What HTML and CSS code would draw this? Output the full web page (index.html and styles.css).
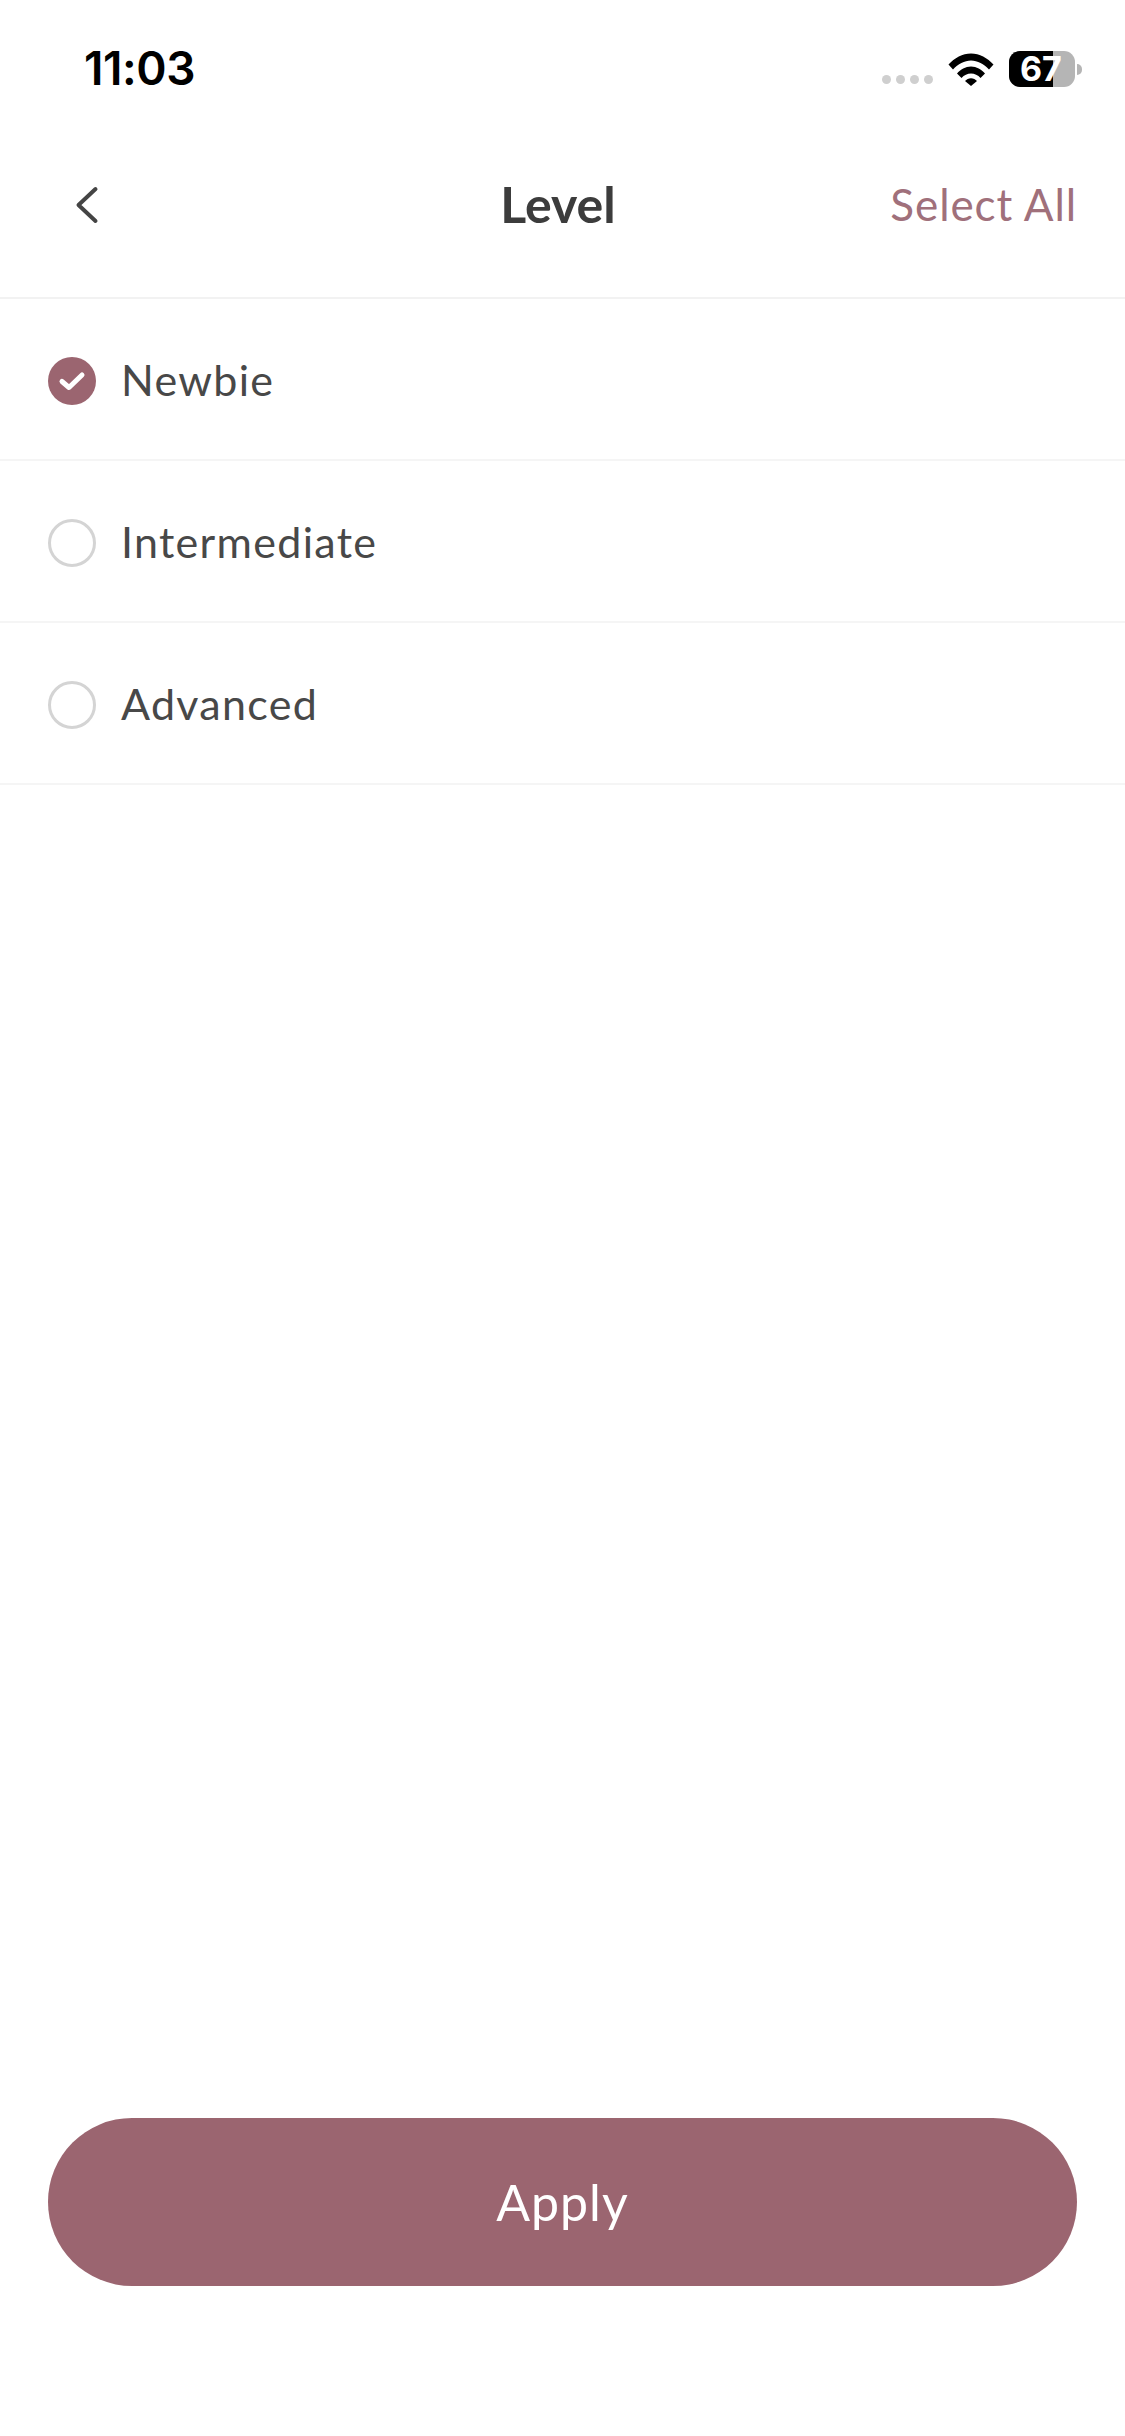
FILE: index.html
```html
<!DOCTYPE html>
<html lang="en">
<head>
    <meta charset="UTF-8">
    <meta name="viewport" content="width=device-width, initial-scale=1.0">
    <title>Level</title>
    <link rel="stylesheet" href="styles.css">
</head>
<body>
    <div class="screen">
        <!-- Status bar -->
        <div class="status-bar">
            <span class="time">11:03</span>
            <div class="status-icons">
                <div class="signal">
                    <span></span><span></span><span></span><span></span>
                </div>
                <svg class="wifi" viewBox="0 0 46 33" width="46" height="33">
                    <path d="M0.5 11.5C6.5 5 14.5 0.5 23 0.5C31.5 0.5 39.5 5 45.5 11.5L41 16.5C36 11 29.5 7.5 23 7.5C16.500 7.5 10 11 5 16.5Z" fill="#000"/>
                    <path d="M9 20.500C12.500 16.500 17.500 13.500 23 13.500C28.500 13.500 33.500 16.500 37 20.500L32.500 25C30 22.200 26.500 20.500 23 20.500C19.500 20.500 16 22.200 13.500 25Z" fill="#000"/>
                    <path d="M17 28C18.500 26.300 20.700 25.200 23 25.200C25.300 25.200 27.500 26.300 29 28L23 33Z" fill="#000"/>
                </svg>
                <div class="battery">
                    <div class="battery-body">
                        <div class="battery-fill"></div>
                        <span class="battery-level">67</span>
                    </div>
                    <div class="battery-nub"></div>
                </div>
            </div>
        </div>

        <!-- Header -->
        <header class="nav-bar">
            <button class="back-btn" aria-label="Back">
                <svg viewBox="0 0 24 38" width="24" height="38">
                    <path d="M20.500 3L3.500 19L20.500 35" fill="none" stroke="#444" stroke-width="4" stroke-linecap="round" stroke-linejoin="round"/>
                </svg>
            </button>
            <h1 class="nav-title">Level</h1>
            <a class="select-all">Select All</a>
        </header>

        <!-- Options -->
        <ul class="level-list">
            <li class="level-row">
                <span class="radio checked">
                    <svg viewBox="0 0 48 48" width="48" height="48">
                        <path d="M14 24.500L21 30.500L34 18" fill="none" stroke="#fff" stroke-width="5" stroke-linecap="round" stroke-linejoin="round"/>
                    </svg>
                </span>
                <span class="level-name">Newbie</span>
            </li>
            <li class="level-row">
                <span class="radio"></span>
                <span class="level-name">Intermediate</span>
            </li>
            <li class="level-row">
                <span class="radio"></span>
                <span class="level-name">Advanced</span>
            </li>
        </ul>

        <div class="footer">
            <button class="apply-btn">Apply</button>
        </div>
    </div>
</body>
</html>
```

FILE: styles.css
```css
/* General Styles */
* {
    box-sizing: border-box;
}

body {
    margin: 0;
    background-color: #ffffff;
    font-family: 'Lato', sans-serif;
    color: #3c3c3c;
}

.screen {
    display: flex;
    flex-direction: column;
    height: 2436px;
    overflow: hidden;
}

/* Status Bar */
.status-bar {
    display: flex;
    justify-content: space-between;
    align-items: center;
    height: 136px;
    padding: 0 43px 0 84px;
}

.time {
    font-family: 'Inter', sans-serif;
    font-size: 46px;
    font-weight: 600;
    letter-spacing: -0.4px;
    color: #000000;
}

.status-icons {
    display: flex;
    align-items: center;
    padding-top: 2px;
}

.signal {
    display: flex;
    gap: 5px;
    margin: 20px 15px 0 0;
}

.signal span {
    width: 9px;
    height: 9px;
    border-radius: 50%;
    background-color: #cfcfcf;
}

.wifi {
    margin-right: 15px;
}

.battery {
    display: flex;
    align-items: center;
    gap: 2px;
}

.battery-body {
    position: relative;
    width: 66px;
    height: 36px;
    border-radius: 11px;
    background-color: #b5b5b5;
}

.battery-fill {
    width: 44px;
    height: 100%;
    border-radius: 11px 0 0 11px;
    background-color: #000000;
}

.battery-level {
    position: absolute;
    top: 0;
    left: 11px;
    font-family: 'Inter', sans-serif;
    font-size: 34px;
    font-weight: 700;
    line-height: 36px;
    color: #ffffff;
}

.battery-nub {
    width: 5px;
    height: 11px;
    border-radius: 0 5px 5px 0;
    background-color: #b5b5b5;
}

/* Header */
.nav-bar {
    position: relative;
    display: flex;
    justify-content: space-between;
    align-items: center;
    height: 163px;
    padding: 0 48px 25px 75px;
    border-bottom: 2px solid #f2f2f2;
}

.back-btn {
    display: flex;
    margin-top: 2px;
    padding: 0;
    border: none;
    background: none;
}

.nav-title {
    position: absolute;
    left: 0;
    right: 0;
    margin: 0;
    padding-right: 9px;
    font-size: 50px;
    font-weight: 700;
    text-align: center;
    pointer-events: none;
}

.select-all {
    font-size: 44px;
    font-weight: 400;
    letter-spacing: 0.9px;
    color: #a0707b;
}

/* Options */
.level-list {
    margin: 0;
    padding: 0;
    list-style: none;
}

.level-row {
    display: flex;
    align-items: center;
    gap: 25px;
    height: 162px;
    padding: 4px 48px 0;
    border-bottom: 2px solid #f5f5f5;
}

.radio {
    flex-shrink: 0;
    width: 48px;
    height: 48px;
    border: 3px solid #d4d4d4;
    border-radius: 50%;
}

.radio.checked {
    border: none;
    background-color: #9b6570;
}

.radio svg {
    display: block;
}

.level-name {
    padding-bottom: 4px;
    font-size: 43px;
    font-weight: 400;
    letter-spacing: 1.3px;
    color: #484848;
}

/* Apply Button */
.footer {
    margin-top: auto;
    padding: 0 48px 150px;
}

.apply-btn {
    display: block;
    width: 100%;
    height: 168px;
    border: none;
    border-radius: 84px;
    background-color: #9b6570;
    font-family: 'Lato', sans-serif;
    font-size: 50px;
    font-weight: 400;
    letter-spacing: 1px;
    color: #ffffff;
}
```
